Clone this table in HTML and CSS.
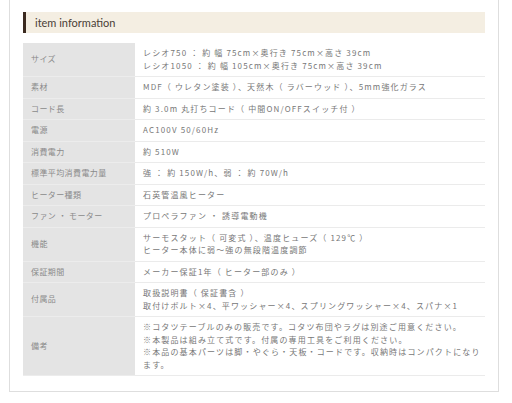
FILE: index.html
```html
<!DOCTYPE html>
<html lang="ja">
<head>
    <meta charset="UTF-8">
    <meta name="viewport" content="width=device-width, initial-scale=1.0">
    <title>item information</title>
    <link rel="stylesheet" href="styles.css">
</head>
<body>

    <div class="info-box">
        <h2 class="info-title">item information</h2>

        <table class="spec">
            <tr>
                <th>サイズ</th>
                <td>レシオ750 ： 約 幅 75cm×奥行き 75cm×高さ 39cm<br>レシオ1050 ： 約 幅 105cm×奥行き 75cm×高さ 39cm</td>
            </tr>
            <tr>
                <th>素材</th>
                <td>MDF（ ウレタン塗装 ）、天然木（ ラバーウッド ）、5mm強化ガラス</td>
            </tr>
            <tr>
                <th>コード長</th>
                <td>約 3.0m 丸打ちコード（ 中間ON/OFFスイッチ付 ）</td>
            </tr>
            <tr>
                <th>電源</th>
                <td>AC100V 50/60Hz</td>
            </tr>
            <tr>
                <th>消費電力</th>
                <td>約 510W</td>
            </tr>
            <tr>
                <th>標準平均消費電力量</th>
                <td>強 ： 約 150W/h、弱 ： 約 70W/h</td>
            </tr>
            <tr>
                <th>ヒーター種類</th>
                <td>石英管温風ヒーター</td>
            </tr>
            <tr>
                <th>ファン ・ モーター</th>
                <td>プロペラファン ・ 誘導電動機</td>
            </tr>
            <tr>
                <th>機能</th>
                <td>サーモスタット（ 可変式 ）、温度ヒューズ（ 129℃ ）<br>ヒーター本体に弱～強の無段階温度調節</td>
            </tr>
            <tr>
                <th>保証期間</th>
                <td>メーカー保証1年（ ヒーター部のみ ）</td>
            </tr>
            <tr>
                <th>付属品</th>
                <td>取扱説明書（ 保証書含 ）<br>取付けボルト×4、平ワッシャー×4、スプリングワッシャー×4、スパナ×1</td>
            </tr>
            <tr>
                <th>備考</th>
                <td>※コタツテーブルのみの販売です。コタツ布団やラグは別途ご用意ください。<br>※本製品は組み立て式です。付属の専用工具をご利用ください。<br>※本品の基本パーツは脚・やぐら・天板・コードです。収納時はコンパクトになります。</td>
            </tr>
        </table>
    </div>

</body>
</html>
```

FILE: styles.css
```css
body {
    margin: 0;
    background: #fff;
    font-family: "Noto Sans CJK JP", "Noto Sans", sans-serif;
}

.info-box {
    width: 462px;
    margin-left: 9px;
    padding: 12px 13px 15px 13px;
    border: 1px solid #dedede;
    border-top: none;
}

.info-title {
    margin: 0 0 10px 0;
    height: 21px;
    line-height: 21px;
    padding-left: 9px;
    background: #f4eee2;
    border-left: 3px solid #3b2a20;
    font-family: Lato, "Open Sans", sans-serif;
    font-size: 11px;
    font-weight: 400;
    color: #4a4036;
}

.spec {
    width: 100%;
    border-collapse: collapse;
}

.spec th,
.spec td {
    padding: 4px 0 4px 8px;
    font-size: 8px;
    line-height: 12.5px;
    font-weight: 400;
    text-align: left;
    vertical-align: middle;
}

.spec th {
    width: 104px;
    background: #e4e4e4;
    color: #8a8a8a;
    border-bottom: 1px solid #ececec;
    letter-spacing: 0.4px;
}

.spec td {
    padding-right: 4px;
    color: #777;
    border-bottom: 1px solid #ebebeb;
    letter-spacing: 1.15px;
}
```
